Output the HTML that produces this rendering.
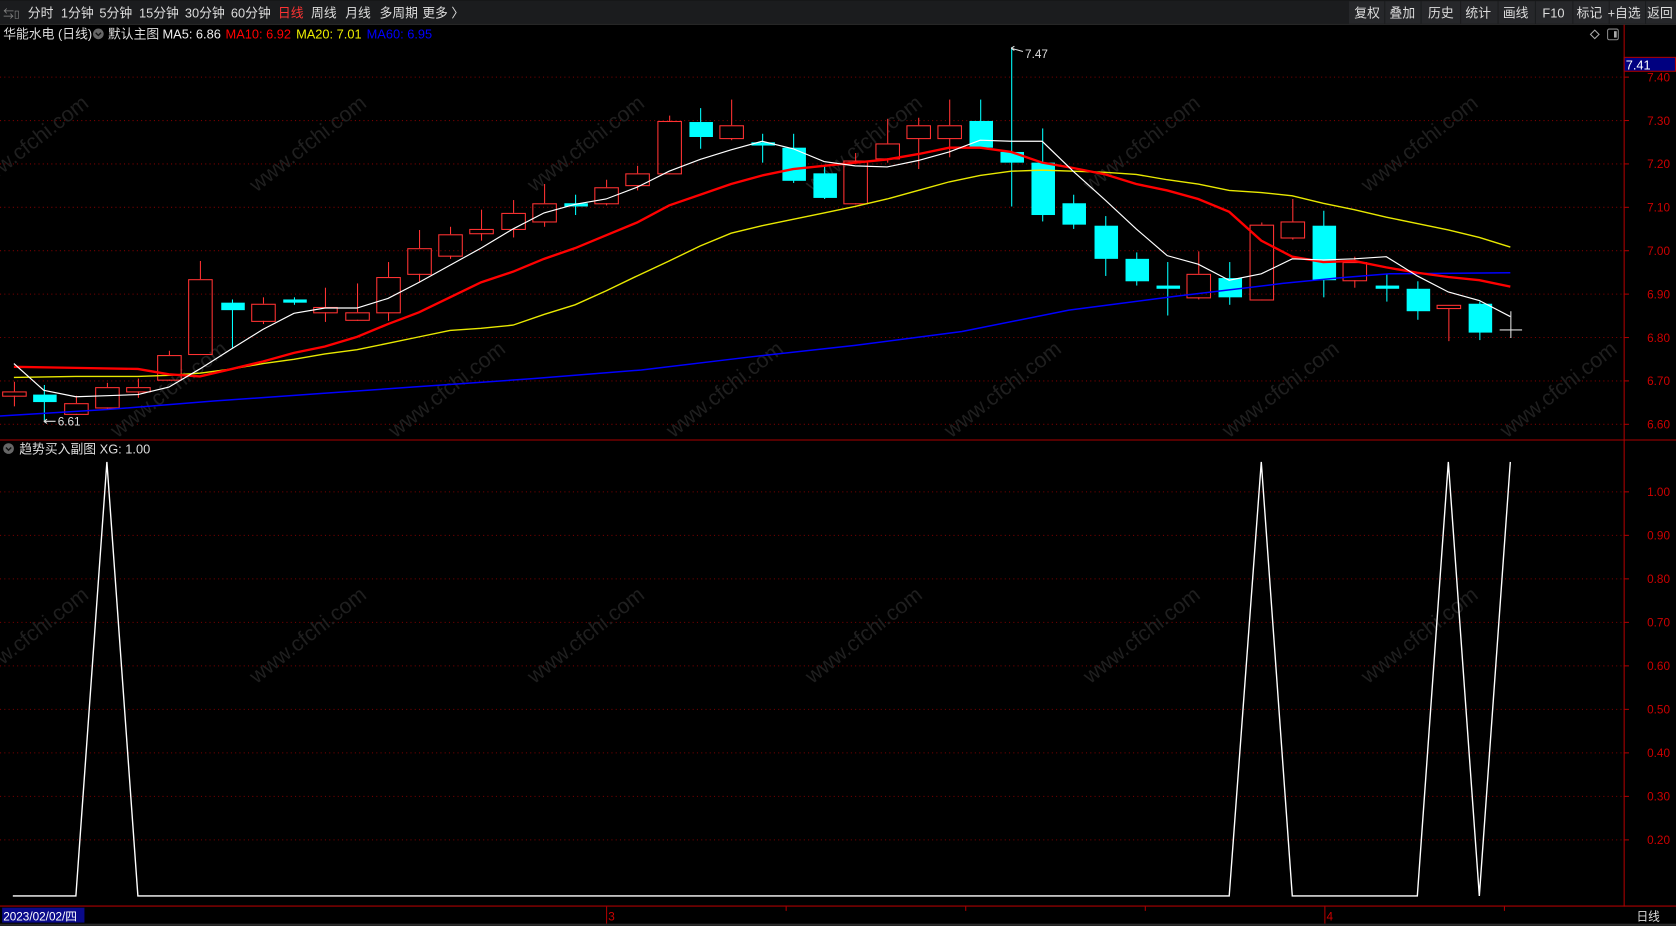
<!DOCTYPE html>
<html><head><meta charset="utf-8"><style>
html,body{margin:0;padding:0;background:#000;overflow:hidden;width:1676px;height:926px}
svg{display:block;overflow:hidden}
text{font-family:"Liberation Sans","Noto Sans CJK SC",sans-serif}
</style></head><body>
<svg id="s" width="1676" height="926" viewBox="0 0 1568 866" xmlns="http://www.w3.org/2000/svg">
<rect x="0" y="0" width="1568" height="866" fill="#000"/>
<rect x="0" y="0" width="1568" height="22" fill="#1b1c1e"/>
<line x1="0" y1="22.5" x2="1568" y2="22.5" stroke="#333" />
<g font-size="12" fill="#ddd">
<text x="3" y="16" fill="#888" font-size="10">⇆▯</text>
<text x="26" y="16">分时</text><text x="57" y="16">1分钟</text><text x="93" y="16">5分钟</text>
<text x="130" y="16">15分钟</text><text x="173" y="16">30分钟</text><text x="216" y="16">60分钟</text>
<text x="260" y="16" fill="#f33">日线</text><text x="291" y="16">周线</text><text x="323" y="16">月线</text>
<text x="355" y="16">多周期</text><text x="395" y="16">更多 〉</text>
</g>
<g fill="#26272a">
<rect x="1262" y="1" width="33" height="21"/><rect x="1296" y="1" width="33" height="21"/><rect x="1330" y="1" width="36" height="21"/>
<rect x="1367" y="1" width="34" height="21"/><rect x="1402" y="1" width="34" height="21"/><rect x="1437" y="1" width="34" height="21"/>
<rect x="1472" y="1" width="33" height="21"/><rect x="1506" y="1" width="33" height="21"/><rect x="1540" y="1" width="28" height="21"/>
</g>
<g font-size="12" fill="#ddd">
<text x="1267" y="16">复权</text><text x="1300" y="16">叠加</text><text x="1336" y="16">历史</text><text x="1371" y="16">统计</text>
<text x="1406" y="16">画线</text><text x="1443" y="16">F10</text><text x="1475" y="16">标记</text><text x="1504" y="16">+自选</text><text x="1541" y="16">返回</text>
</g>
<g font-size="12">
<text x="3" y="36" fill="#ddd">华能水电 (日线)</text>
<circle cx="92" cy="31.5" r="5" fill="#666"/><path d="M89.5 30.5 L92 33 L94.5 30.5" stroke="#111" fill="none" stroke-width="1.3"/>
<text x="101" y="36" fill="#ddd">默认主图</text>
<text x="152" y="36" fill="#eee">MA5: 6.86</text>
<text x="211" y="36" fill="#f00">MA10: 6.92</text>
<text x="277" y="36" fill="#ee0">MA20: 7.01</text>
<text x="343" y="36" fill="#00f">MA60: 6.95</text>
</g>
<path d="M1492 28 l4 4 l-4 4 l-4 -4z" stroke="#aaa" fill="none"/>
<rect x="1504" y="27" width="10" height="10" rx="1.5" stroke="#888" fill="none"/><rect x="1510" y="29" width="2.5" height="6" fill="#aaa"/>
<g id="grid" stroke="#7a0000" stroke-dasharray="1,3"></g>
<line x1="1519.5" y1="23" x2="1519.5" y2="848" stroke="#a00"/>
<line x1="0" y1="411.5" x2="1568" y2="411.5" stroke="#a00"/>
<line x1="0" y1="847.5" x2="1568" y2="847.5" stroke="#a00"/>
<rect x="1519.5" y="53.5" width="48" height="13" fill="#000080" stroke="#a00"/>
<text x="1521" y="65" font-size="12" fill="#fff">7.41</text>
<g id="axl" font-size="11" fill="#c00"></g>
<g id="wm" font-size="20" fill="#1f1f1f"></g>
<g id="candles"></g>
<g id="ma" fill="none"></g>
<text x="959" y="54" font-size="11" fill="#ddd">7.47</text>
<path d="M946 45 l3 -2 M946 45 l3 2 M946 45 L957 48" stroke="#ddd" fill="none"/>
<text x="54" y="398" font-size="11" fill="#ddd">6.61</text>
<path d="M41 394 l3 -2 M41 394 l3 2 M41 394 L52 394" stroke="#ddd" fill="none"/>
<circle cx="8" cy="419.5" r="5" fill="#666"/><path d="M5.5 418.5 L8 421 L10.5 418.5" stroke="#111" fill="none" stroke-width="1.3"/>
<text x="18" y="424" font-size="12" fill="#ddd">趋势买入副图  XG: 1.00</text>
<polyline points="12,838 71,838 100,432 129,838 1150,838 1180,432 1209,838 1326,838 1355,432 1384,838 1413,432" stroke="#fff" stroke-width="1.3" fill="none"/>
<rect x="2" y="849" width="77" height="14" fill="#0a0a8a"/>
<text x="3" y="861" font-size="11" fill="#fff">2023/02/02/四</text>
<line x1="567.5" y1="848" x2="567.5" y2="864" stroke="#a00"/><text x="569" y="861" font-size="11" fill="#c00">3</text>
<line x1="1239.5" y1="848" x2="1239.5" y2="864" stroke="#a00"/><text x="1241" y="861" font-size="11" fill="#c00">4</text>
<g stroke="#a00"><line x1="735.5" y1="848" x2="735.5" y2="852"/><line x1="903.5" y1="848" x2="903.5" y2="852"/><line x1="1071.5" y1="848" x2="1071.5" y2="852"/><line x1="1407.5" y1="848" x2="1407.5" y2="852"/></g>
<text x="1531" y="861" font-size="11" fill="#ddd">日线</text>
<rect x="0" y="864" width="1568" height="2" fill="#2a2a2a"/>
</svg>
<script>
var NS="http://www.w3.org/2000/svg";
function el(p,t,a){var e=document.createElementNS(NS,t);for(var k in a)e.setAttribute(k,a[k]);p.appendChild(e);return e;}
var g=document.getElementById('grid');
for(var i=0;i<9;i++){var y=72+i*40.6;el(g,'line',{x1:0,y1:y,x2:1519,y2:y});}
for(var i=0;i<9;i++){var y=460+i*40.7;el(g,'line',{x1:0,y1:y,x2:1519,y2:y});}
var ax=document.getElementById('axl');
var lp=['7.40','7.30','7.20','7.10','7.00','6.90','6.80','6.70','6.60'];
lp.forEach(function(t,i){var y=72+i*40.6;el(ax,'line',{x1:1519,y1:y,x2:1524,y2:y,stroke:'#a00'});var e=el(ax,'text',{x:1541,y:y+4});e.textContent=t;});
var sp=['1.00','0.90','0.80','0.70','0.60','0.50','0.40','0.30','0.20'];
sp.forEach(function(t,i){var y=460+i*40.7;el(ax,'line',{x1:1519,y1:y,x2:1524,y2:y,stroke:'#a00'});var e=el(ax,'text',{x:1541,y:y+4});e.textContent=t;});
var wm=document.getElementById('wm');
for(var r=0;r<4;r++)for(var c=0;c<6;c++){var x=c*260+(r%2?130:0)-20,y=r*230+180;if(y>840)continue;var e=el(wm,'text',{x:x,y:y,transform:'rotate(-38 '+x+' '+y+')'});e.textContent='www.cfchi.com';}
var C=[[13,'r',366,370,357,380],[41,'c',369,376,360,393],[71,'r',377,387,370,388],[100,'r',362,381,358,383],[129,'r',362,366,354,372],[158,'r',332,355,328,356],[187,'r',261,331,244,332],[217,'c',283,290,280,325],[246,'r',284,300,278,303],[275,'c',280,283,278,285],[304,'r',287,292,269,301],[334,'r',292,299,265,300],[363,'r',259,292,245,300],[392,'r',232,256,215,264],[421,'r',219,239,212,242],[450,'r',214,218,196,225],[480,'r',199,214,187,222],[509,'r',190,207,172,212],[538,'c',190,193,182,201],[567,'r',175,190,168,192],[596,'r',162,173,155,178],[626,'r',113,162,108,163],[655,'c',114,128,101,139],[684,'r',117,129,93,131],[713,'c',133,136,125,152],[742,'c',138,169,125,171],[771,'c',162,185,155,186],[800,'r',150,190,143,191],[830,'r',134,148,111,152],[859,'r',117,129,110,158],[888,'r',117,129,93,147],[917,'c',113,138,93,139],[946,'c',142,152,44,193],[975,'c',152,201,120,207],[1004,'c',190,210,182,214],[1034,'c',211,242,202,258],[1063,'c',242,263,236,267],[1092,'c',267,270,245,295],[1121,'r',256,278,235,280],[1150,'c',260,278,245,285],[1180,'r',210,280,208,281],[1209,'r',207,222,186,224],[1238,'c',211,262,197,278],[1267,'r',245,262,240,269],[1297,'c',267,270,256,282],[1326,'c',270,291,263,299],[1355,'r',285,288,285,319],[1384,'c',284,311,282,318]];
var cg=document.getElementById('candles');
C.forEach(function(d){var x=d[0],col=d[1]=='r'?'#ff3232':'#00ffff';
 if(d[1]=='r'){el(cg,'line',{x1:x+.5,y1:d[4],x2:x+.5,y2:d[2],stroke:col});el(cg,'line',{x1:x+.5,y1:d[3],x2:x+.5,y2:d[5],stroke:col});el(cg,'rect',{x:x-10.5,y:d[2]+.5,width:22,height:Math.max(d[3]-d[2],1),fill:'none',stroke:col});}
 else{el(cg,'line',{x1:x+.5,y1:d[4],x2:x+.5,y2:d[5],stroke:col});el(cg,'rect',{x:x-10,y:d[2],width:22,height:Math.max(d[3]-d[2],2),fill:col});}
});
el(cg,'path',{d:'M1403 308.5 H1424 M1413.5 291 V316',stroke:'#ddd',fill:'none'});
var ma=document.getElementById('ma');
function pl(p,c,w){el(ma,'polyline',{points:p,stroke:c,'stroke-width':w});}
pl('0,389 100,383 200,375 300,368 400,361 500,354 600,346 700,334 800,323 900,310 1000,290 1100,277 1200,265 1250,260 1300,256 1413,255','#0000ff',1.4);
pl('13,353 71,352 129,352 158,351 187,349 217,345 246,340 275,336 304,331 334,327 363,321 392,315 421,309 450,307 480,304 509,294 538,285 567,272 596,258 626,244 655,230 684,218 713,211 742,205 771,199 800,193 830,186 859,178 888,170 917,164 946,160 975,159 1004,160 1034,161 1063,163 1092,168 1121,172 1150,178 1180,180 1209,183 1238,190 1267,196 1297,203 1326,209 1355,215 1384,222 1413,231','#e8e800',1.3);
pl('13,343 71,344 129,345 158,350 187,352 217,345 246,338 275,330 304,324 334,315 363,303 392,292 421,278 450,264 480,254 509,242 538,232 567,220 596,208 626,192 655,182 684,172 713,164 742,158 771,155 800,152 830,149 859,144 888,138 917,138 946,142 975,152 1004,157 1034,163 1063,172 1092,178 1121,186 1150,198 1180,225 1209,240 1238,245 1267,244 1297,250 1326,255 1355,259 1384,262 1413,268','#ff0000',2.2);
pl('13,340 41,365 71,371 100,370 129,369 158,362 187,345 217,326 246,308 275,293 304,288 334,288 363,279 392,264 421,248 450,232 480,214 509,199 538,191 567,186 596,175 626,160 655,149 684,140 713,132 742,139 771,151 800,155 830,156 859,150 888,142 917,131 946,132 975,132 1004,160 1034,187 1063,214 1092,239 1121,247 1150,262 1180,256 1209,242 1238,243 1267,242 1297,240 1326,258 1355,273 1384,281 1413,296','#ffffff',1.1);
</script>
</body></html>
